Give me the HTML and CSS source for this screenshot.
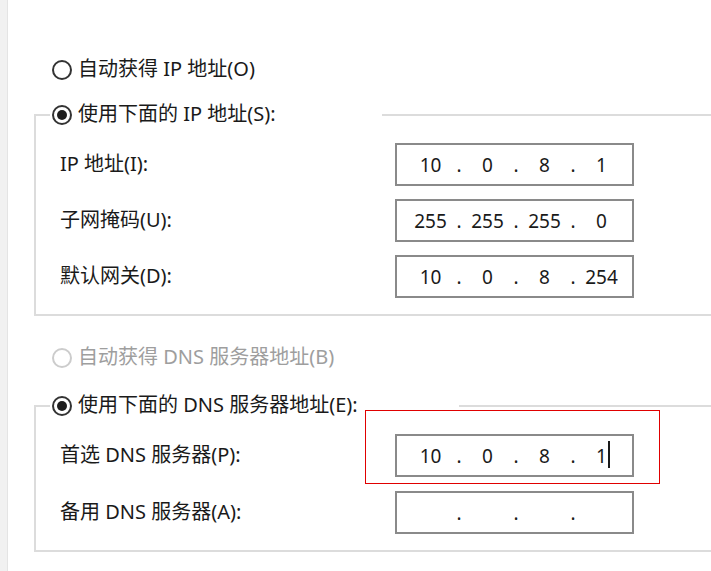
FILE: index.html
```html
<!DOCTYPE html>
<html lang="zh-CN">
<head>
<meta charset="utf-8">
<title>IPv4 属性</title>
<link rel="stylesheet" href="styles.css">
</head>
<body>
<div class="window">
  <div class="strip"></div>
  <div class="content">
    <div class="radio-row"><span class="radio"></span><span class="text">自动获得 IP 地址(O)</span></div>
    <fieldset class="group group-ip">
      <legend class="legend legend-ip"><span class="legend-inner"><span class="radio checked"></span><span class="text">使用下面的 IP 地址(S):</span></span></legend>
      <div class="fields">
        <span class="field-label">IP 地址(I):</span>
        <div class="ipbox"><span class="oct">10</span><span class="dot">.</span><span class="oct">0</span><span class="dot">.</span><span class="oct">8</span><span class="dot">.</span><span class="oct">1</span></div>
        <span class="field-label">子网掩码(U):</span>
        <div class="ipbox"><span class="oct">255</span><span class="dot">.</span><span class="oct">255</span><span class="dot">.</span><span class="oct">255</span><span class="dot">.</span><span class="oct">0</span></div>
        <span class="field-label">默认网关(D):</span>
        <div class="ipbox"><span class="oct">10</span><span class="dot">.</span><span class="oct">0</span><span class="dot">.</span><span class="oct">8</span><span class="dot">.</span><span class="oct">254</span></div>
      </div>
    </fieldset>
    <div class="radio-row disabled row-dns"><span class="radio"></span><span class="text">自动获得 DNS 服务器地址(B)</span></div>
    <fieldset class="group group-dns">
      <legend class="legend legend-dns"><span class="legend-inner"><span class="radio checked"></span><span class="text">使用下面的 DNS 服务器地址(E):</span></span></legend>
      <div class="fields fields-dns">
        <span class="field-label">首选 DNS 服务器(P):</span>
        <div class="ipbox focused"><span class="oct">10</span><span class="dot">.</span><span class="oct">0</span><span class="dot">.</span><span class="oct">8</span><span class="dot">.</span><span class="oct"><span class="typed">1<span class="caret"></span></span></span><span class="annotation"></span></div>
        <span class="field-label">备用 DNS 服务器(A):</span>
        <div class="ipbox"><span class="oct"></span><span class="dot">.</span><span class="oct"></span><span class="dot">.</span><span class="oct"></span><span class="dot">.</span><span class="oct"></span></div>
      </div>
    </fieldset>
  </div>
</div>
</body>
</html>
```
FILE: styles.css
```css
html, body {
  margin: 0;
  padding: 0;
  background: #ffffff;
}

body {
  font-family: "Noto Sans", "Noto Sans CJK SC", sans-serif;
  font-size: 20px;
  color: #1a1a1a;
  overflow: hidden;
}

.window {
  display: flex;
  width: 711px;
  height: 571px;
  overflow: hidden;
}

.strip {
  flex: 0 0 7px;
  background: #f1f1f1;
  border-right: 1px solid #e4e4e4;
}

.content {
  flex: 1;
  min-width: 0;
  display: flex;
  flex-direction: column;
  padding-left: 26px;
  padding-top: 58px;
}

.radio-row {
  display: flex;
  align-items: center;
  gap: 6px;
  height: 24px;
  padding-left: 18px;
  white-space: nowrap;
}

.text {
  line-height: 24px;
  position: relative;
  top: -1px;
}

.radio {
  flex: none;
  width: 20px;
  height: 20px;
  box-sizing: border-box;
  border: 2px solid #333333;
  border-radius: 50%;
  display: flex;
  align-items: center;
  justify-content: center;
  background: #fff;
}

.radio.checked::after {
  content: "";
  width: 10px;
  height: 10px;
  border-radius: 50%;
  background: #1e1e1e;
}

.radio-row.disabled {
  color: #9e9e9e;
}

.radio-row.disabled .radio {
  border-color: #cccccc;
}

.row-dns {
  margin-top: 30px;
}

.group {
  flex: none;
  width: 720px;
  min-width: 0;
  box-sizing: border-box;
  margin: 21px 0 0 0;
  padding: 0;
  border: 2px solid #dcdcdc;
}

.group-dns {
  margin-top: 24px;
}

.legend {
  padding: 0;
  margin-left: 14px;
  height: 24px;
  box-sizing: border-box;
}

.legend-inner {
  display: flex;
  align-items: center;
  gap: 6px;
  height: 24px;
  padding-left: 2px;
  white-space: nowrap;
}

.legend-ip {
  width: 332px;
}

.legend-dns {
  width: 409px;
}

.fields {
  display: grid;
  grid-template-columns: 335px 239px;
  row-gap: 13px;
  align-items: center;
  padding: 16px 0 16px 24px;
}

.fields-dns {
  row-gap: 14px;
}

.field-label {
  white-space: nowrap;
  line-height: 26px;
  position: relative;
  top: -1px;
}

.ipbox {
  position: relative;
  height: 43px;
  box-sizing: border-box;
  border: 2px solid #8a8a8a;
  display: flex;
  align-items: center;
  padding-left: 12px;
  font-size: 19px;
  color: #1a1a1a;
}

.oct {
  flex: none;
  width: 43px;
  text-align: center;
}

.dot {
  flex: none;
  width: 14px;
  text-align: center;
}

.typed {
  position: relative;
}

.caret {
  position: absolute;
  left: calc(100% + 1px);
  top: -2px;
  width: 2px;
  height: 27px;
  background: #1a1a1a;
}

.annotation {
  position: absolute;
  left: -32px;
  top: -26px;
  width: 295px;
  height: 74px;
  box-sizing: border-box;
  border: 1px solid #e00000;
  pointer-events: none;
}
```
